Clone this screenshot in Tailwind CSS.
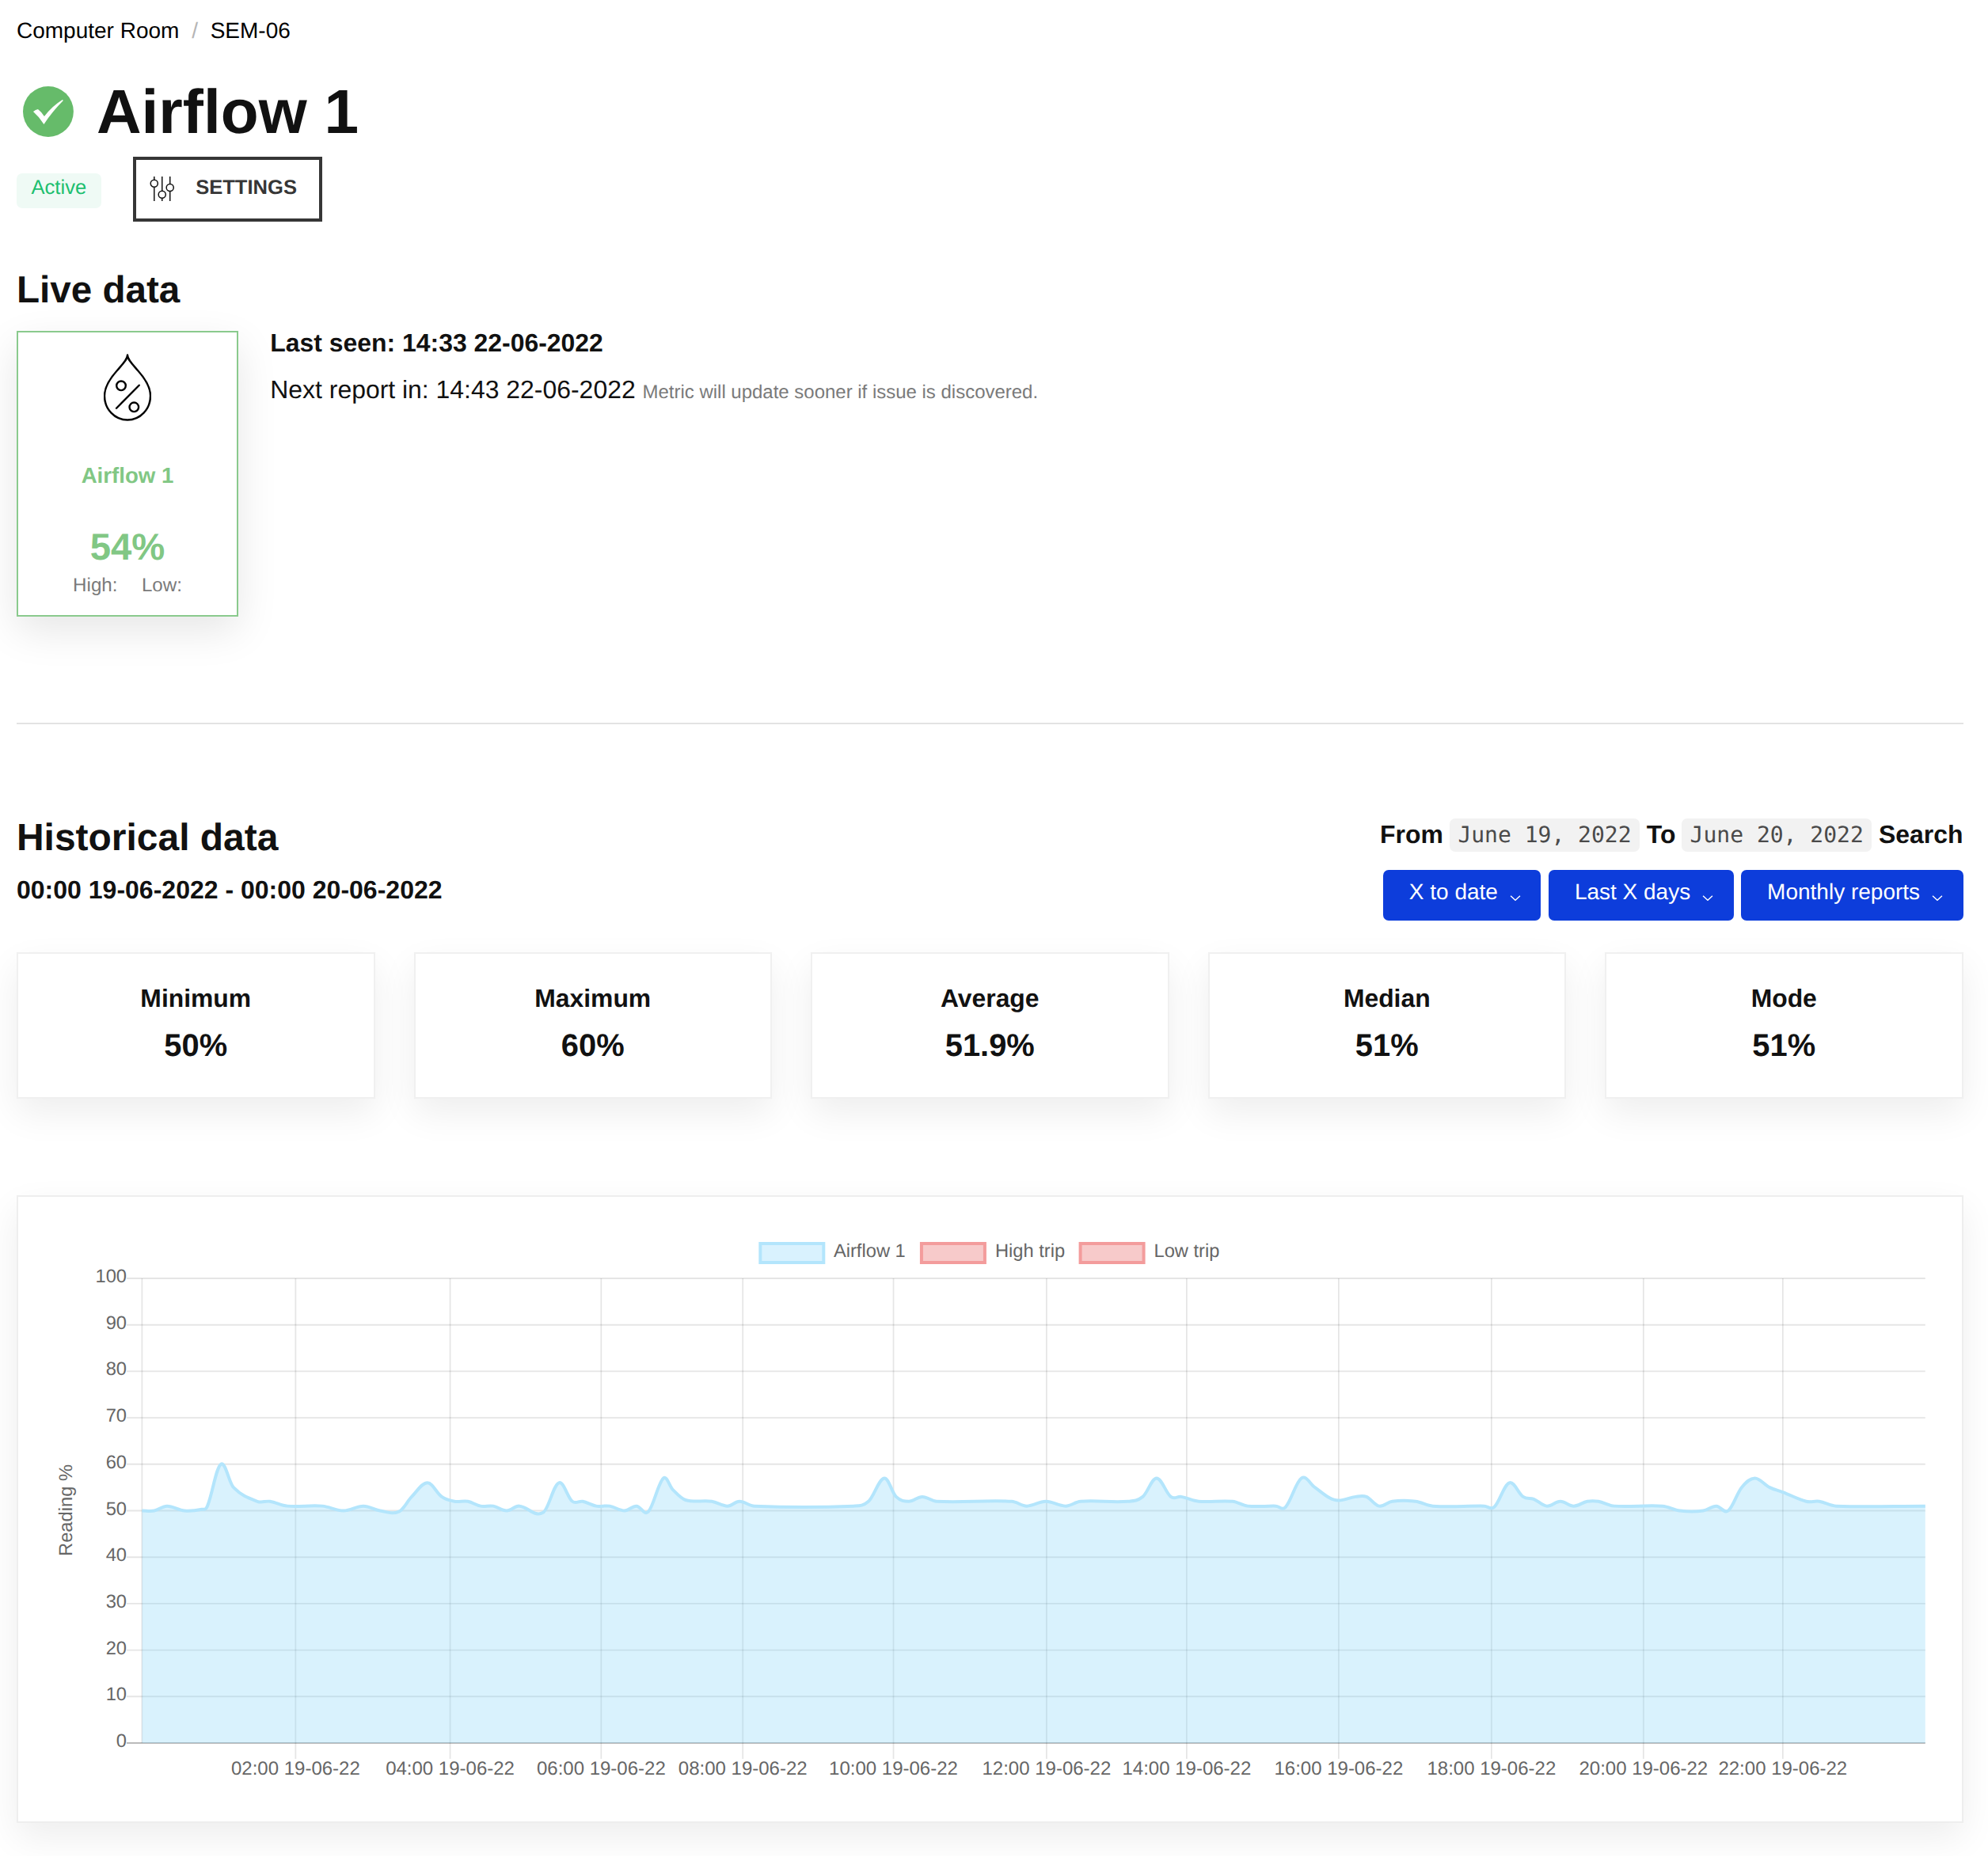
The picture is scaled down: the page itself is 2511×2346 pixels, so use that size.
<!doctype html>
<html lang="en">
<head>
<meta charset="utf-8">
<title>Airflow 1</title>
<script src="https://cdn.jsdelivr.net/npm/@tailwindcss/browser@4"></script>
</head>
<body class="[zoom:1.75] bg-white text-[#111] [font-family:'Liberation_Sans',sans-serif] [text-rendering:geometricPrecision]">
<main class="flex flex-col pr-[18px] pb-6 pl-3">

  <nav class="mt-[10px] flex h-6 items-center text-base text-black">
    <a>Computer Room</a><span class="mx-[9px] text-[#b5b5b5]">/</span><a>SEM-06</a>
  </nav>

  <div class="mt-6 flex h-[45px] items-center gap-[16.6px] pl-[4.6px]">
    <svg class="h-[36.5px] w-[36.5px] shrink-0" viewBox="0 0 64 64"><circle cx="32" cy="32" r="32" fill="#66bb6a"/><path d="M13 32 Q16 29.5 19 29 Q23 32 27 38 Q37 25 50 17 L51 18 Q37 32 26.5 48 Q21 39 13 32Z" fill="#fff"/></svg>
    <h1 class="text-[44.8px] leading-none font-bold">Airflow 1</h1>
  </div>

  <div class="mt-[10px] flex items-start gap-[23px]">
    <span class="mt-3 flex h-[25px] items-center rounded bg-[#effaf5] px-[10.6px] pb-1 text-[14.6px] text-[#1cbf6f]">Active</span>
    <a class="flex h-[47px] w-[136.6px] items-start gap-[15px] border-[2.3px] border-[#363636] pt-[10.6px] pl-2.5 text-[14.6px] font-bold text-[#363636]">
      <svg class="mt-[1.4px] h-[18px] w-[18px] shrink-0" viewBox="0 0 18 18" fill="none" stroke="#111" stroke-width=".85"><path d="M3.3 0V18M9 0V18M14.7 0V18"/><circle cx="3.3" cy="5" r="2.6" fill="#fff"/><circle cx="9" cy="13" r="2.6" fill="#fff"/><circle cx="14.7" cy="8" r="2.6" fill="#fff"/></svg>
      <span class="leading-[20px]">SETTINGS</span>
    </a>
  </div>

  <h2 class="mt-9 text-[27.2px] leading-none font-bold">Live data</h2>

  <section class="mt-[15.4px] flex items-start">
    <div class="flex h-[206.4px] w-40 shrink-0 flex-col items-center border-[1.15px] border-[#8aca8d] pt-[15.6px] shadow-[0_10px_28px_rgba(0,0,0,0.1)]">
      <svg class="h-[48.6px] w-[34.3px]" viewBox="0 0 60 85" fill="none" stroke="#000" stroke-width="2.4"><path d="M30 1.5C30 7 36 13 43 21C52 31 59 41 59 53C59 70 46 83.5 30 83.5C14 83.5 1 70 1 53C1 41 8 31 17 21C24 13 30 7 30 1.5Z" stroke-linejoin="round"/><path d="M44.7 39.7L16 68.7" stroke-linecap="round"/><circle cx="22" cy="40.3" r="5.8"/><circle cx="38.3" cy="67.3" r="5.8"/></svg>
      <div class="mt-[27.6px] text-[15.8px] leading-6 font-bold text-[#81c784]">Airflow 1</div>
      <div class="mt-[26px] text-[27px] leading-none font-bold text-[#81c784]">54%</div>
      <div class="mt-[5.6px] flex h-[18px] items-center gap-[11px] text-[13.8px] text-[#7a7a7a]"><span class="w-[38.6px]">High:</span><span>Low:</span></div>
    </div>
    <div class="-mt-[3.1px] ml-[23px]">
      <p class="text-[18.25px] leading-6 font-bold">Last seen: 14:33 22-06-2022</p>
      <p class="mt-[9.5px] text-[18.25px] leading-6">Next report in: 14:43 22-06-2022 <small class="text-[13.7px] text-[#7a7a7a]">Metric will update sooner if issue is discovered.</small></p>
    </div>
  </section>

  <hr class="mt-[76.8px] h-[1.15px] border-0 bg-[#e3e3e3]">

  <section class="mt-[68px] flex items-start justify-between">
    <div>
      <h2 class="mt-[0.4px] text-[27.4px] leading-none font-bold">Historical data</h2>
      <p class="mt-[11.5px] text-[18.3px] leading-6 font-bold">00:00 19-06-2022 - 00:00 20-06-2022</p>
    </div>
    <div class="flex flex-col items-end">
      <div class="flex h-6 items-center text-[18.25px] font-bold">
        <span>From</span>
        <code class="mr-[5px] ml-[4.6px] rounded bg-[#f2f2f2] px-1.5 text-base leading-6 font-normal text-[#4a4a4a] [font-family:'DejaVu_Sans_Mono',monospace]">June 19, 2022</code>
        <span>To</span>
        <code class="mr-[5px] ml-[4.4px] rounded bg-[#f2f2f2] px-1.5 text-base leading-6 font-normal text-[#4a4a4a] [font-family:'DejaVu_Sans_Mono',monospace]">June 20, 2022</code>
        <span>Search</span>
      </div>
      <div class="mt-[13px] flex gap-[5.4px] text-base text-white">
        <a class="flex h-[36.6px] items-center gap-[8.5px] rounded bg-[#0d3ddb] pr-[14.6px] pl-[18.9px]"><span class="mb-1 leading-6">X to date</span><svg class="mt-1 h-1 w-2" viewBox="0 0 8 4" fill="none" stroke="#fff" stroke-width=".8"><path d="M.6 .4L4 3.6L7.4 .4"/></svg></a>
        <a class="flex h-[36.6px] items-center gap-[8.5px] rounded bg-[#0d3ddb] pr-[14.6px] pl-[18.9px]"><span class="mb-1 leading-6">Last X days</span><svg class="mt-1 h-1 w-2" viewBox="0 0 8 4" fill="none" stroke="#fff" stroke-width=".8"><path d="M.6 .4L4 3.6L7.4 .4"/></svg></a>
        <a class="flex h-[36.6px] items-center gap-[8.5px] rounded bg-[#0d3ddb] pr-[14.6px] pl-[18.9px]"><span class="mb-1 leading-6">Monthly reports</span><svg class="mt-1 h-1 w-2" viewBox="0 0 8 4" fill="none" stroke="#fff" stroke-width=".8"><path d="M.6 .4L4 3.6L7.4 .4"/></svg></a>
      </div>
    </div>
  </section>

  <section class="mt-[23px] grid grid-cols-5 gap-7">
    <div class="flex h-[105.7px] flex-col items-center border-[1.15px] border-[#f0f0f0] pt-[20px] shadow-[0_10px_25px_rgba(0,0,0,0.07)]"><div class="text-[18.2px] leading-6 font-bold">Minimum</div><div class="mt-[8.2px] text-[22.8px] leading-7 font-bold">50%</div></div>
    <div class="flex h-[105.7px] flex-col items-center border-[1.15px] border-[#f0f0f0] pt-[20px] shadow-[0_10px_25px_rgba(0,0,0,0.07)]"><div class="text-[18.2px] leading-6 font-bold">Maximum</div><div class="mt-[8.2px] text-[22.8px] leading-7 font-bold">60%</div></div>
    <div class="flex h-[105.7px] flex-col items-center border-[1.15px] border-[#f0f0f0] pt-[20px] shadow-[0_10px_25px_rgba(0,0,0,0.07)]"><div class="text-[18.2px] leading-6 font-bold">Average</div><div class="mt-[8.2px] text-[22.8px] leading-7 font-bold">51.9%</div></div>
    <div class="flex h-[105.7px] flex-col items-center border-[1.15px] border-[#f0f0f0] pt-[20px] shadow-[0_10px_25px_rgba(0,0,0,0.07)]"><div class="text-[18.2px] leading-6 font-bold">Median</div><div class="mt-[8.2px] text-[22.8px] leading-7 font-bold">51%</div></div>
    <div class="flex h-[105.7px] flex-col items-center border-[1.15px] border-[#f0f0f0] pt-[20px] shadow-[0_10px_25px_rgba(0,0,0,0.07)]"><div class="text-[18.2px] leading-6 font-bold">Mode</div><div class="mt-[8.2px] text-[22.8px] leading-7 font-bold">51%</div></div>
  </section>

  <section class="mt-[69.7px] border-[1.15px] border-[#eeeeee] shadow-[0_10px_25px_rgba(0,0,0,0.07)]">
    <svg class="block h-[451px] w-full" viewBox="23 1512 2454.7 789.25" preserveAspectRatio="none" font-size="23.7" fill="#666">
      <g stroke="#000" stroke-opacity=".1" stroke-width="1.9" fill="none">
        <path d="M160 1615H2432M160 1673.7H2432M160 1732.4H2432M160 1791.1H2432M160 1849.8H2432M160 1908.5H2432M160 1967.2H2432M160 2025.9H2432M160 2084.6H2432M160 2143.3H2432"/>
        <path d="M179.4 1615V2202M373.4 1615V2222M568.6 1615V2222M759.4 1615V2222M938.3 1615V2222M1128.6 1615V2222M1322 1615V2222M1499 1615V2222M1691 1615V2222M1884 1615V2222M2076 1615V2222M2252 1615V2222" stroke-width="1.75"/>
      </g>
      <path d="M160 2202H2432" stroke="#000" stroke-opacity=".27" stroke-width="2" fill="none"/>
      <path id="area" fill="#81d4fa" fill-opacity=".3" stroke="none"/>
      <path id="line" fill="none" stroke="#b3e5fc" stroke-width="4"/>

      <rect x="960.4" y="1571" width="80" height="24" fill="#d9f2fe" stroke="#b3e5fc" stroke-width="4"/>
      <rect x="1164" y="1571" width="80" height="24" fill="#f7caca" stroke="#f39c9c" stroke-width="4"/>
      <rect x="1364.7" y="1571" width="80" height="24" fill="#f7caca" stroke="#f39c9c" stroke-width="4"/>
      <text x="1053" y="1588">Airflow 1</text>
      <text x="1257" y="1588">High trip</text>
      <text x="1457.6" y="1588">Low trip</text>

      <g text-anchor="end">
        <text x="160" y="1620">100</text><text x="160" y="1678.7">90</text><text x="160" y="1737.4">80</text><text x="160" y="1796.1">70</text><text x="160" y="1854.8">60</text><text x="160" y="1913.5">50</text><text x="160" y="1972.2">40</text><text x="160" y="2030.9">30</text><text x="160" y="2089.6">20</text><text x="160" y="2148.3">10</text><text x="160" y="2207">0</text>
      </g>
      <text transform="translate(91 1908) rotate(-90)" text-anchor="middle">Reading %</text>
      <g text-anchor="middle" font-size="24">
        <text x="373.4" y="2241.5">02:00 19-06-22</text><text x="568.6" y="2241.5">04:00 19-06-22</text><text x="759.4" y="2241.5">06:00 19-06-22</text><text x="938.3" y="2241.5">08:00 19-06-22</text><text x="1128.6" y="2241.5">10:00 19-06-22</text><text x="1322" y="2241.5">12:00 19-06-22</text><text x="1499" y="2241.5">14:00 19-06-22</text><text x="1691" y="2241.5">16:00 19-06-22</text><text x="1884" y="2241.5">18:00 19-06-22</text><text x="2076" y="2241.5">20:00 19-06-22</text><text x="2252" y="2241.5">22:00 19-06-22</text>
      </g>
    </svg>
  </section>
</main>
<script>
  var pts = [[179.4,50],[195,50],[211,51],[233,50],[255,50.3],[262,51],[279,60],[295,55],[325,52],[341,52],[363,51],[407,51],[434,50],[459,51],[480,50],[504,49.8],[520,53],[540,56],[558,53],[574,52],[591,52],[607,51],[623,51],[640,50],[656,51],[686,49.6],[706,56],[723,52],[736,52],[753,51],[770,51],[789,50],[804,51],[819,49.8],[838,57],[850,54.5],[866,52.3],[899,52],[919,51],[934,52],[953,51],[1078,51],[1097,52],[1117,57],[1132,53],[1148,52],[1165,53],[1183,52],[1278,52],[1297,51],[1321,52],[1346,51],[1365,52],[1424.5,52],[1443.5,53],[1461,57],[1479,53],[1492,53],[1514,52],[1557,52],[1576,51],[1611.5,51],[1624,50.8],[1644,57],[1661,55],[1679,52.8],[1691,52.2],[1712.5,53],[1726,53],[1742,51],[1758.6,52],[1788,52],[1810,51],[1875,51],[1887.6,50.8],[1906.5,56],[1924,53],[1937.4,52.5],[1953.7,51],[1971,52],[1988,51],[2005,52],[2019,52],[2039,51],[2100,51],[2122,50],[2151.5,50],[2168,51],[2183,50],[2200,55],[2216.6,57],[2235.5,55],[2252,54],[2281.6,52],[2298,52],[2319.5,51],[2432,51]];
  var p = pts.map(function (q) { return [q[0], 2202 - q[1] * 5.87]; });
  var d = 'M' + p[0][0] + ' ' + p[0][1];
  for (var i = 0; i < p.length - 1; i++) {
    var a = p[Math.max(i - 1, 0)], b = p[i], c = p[i + 1], e = p[Math.min(i + 2, p.length - 1)];
    var h = (c[0] - b[0]) * 0.36;
    var s1 = (c[1] - a[1]) / ((c[0] - a[0]) || 1), s2 = (e[1] - b[1]) / ((e[0] - b[0]) || 1);
    d += 'C' + (b[0] + h) + ' ' + (b[1] + s1 * h) + ' ' + (c[0] - h) + ' ' + (c[1] - s2 * h) + ' ' + c[0] + ' ' + c[1];
  }
  document.getElementById('line').setAttribute('d', d);
  document.getElementById('area').setAttribute('d', d + 'V2202H179.4Z');
</script>
</body>
</html>
